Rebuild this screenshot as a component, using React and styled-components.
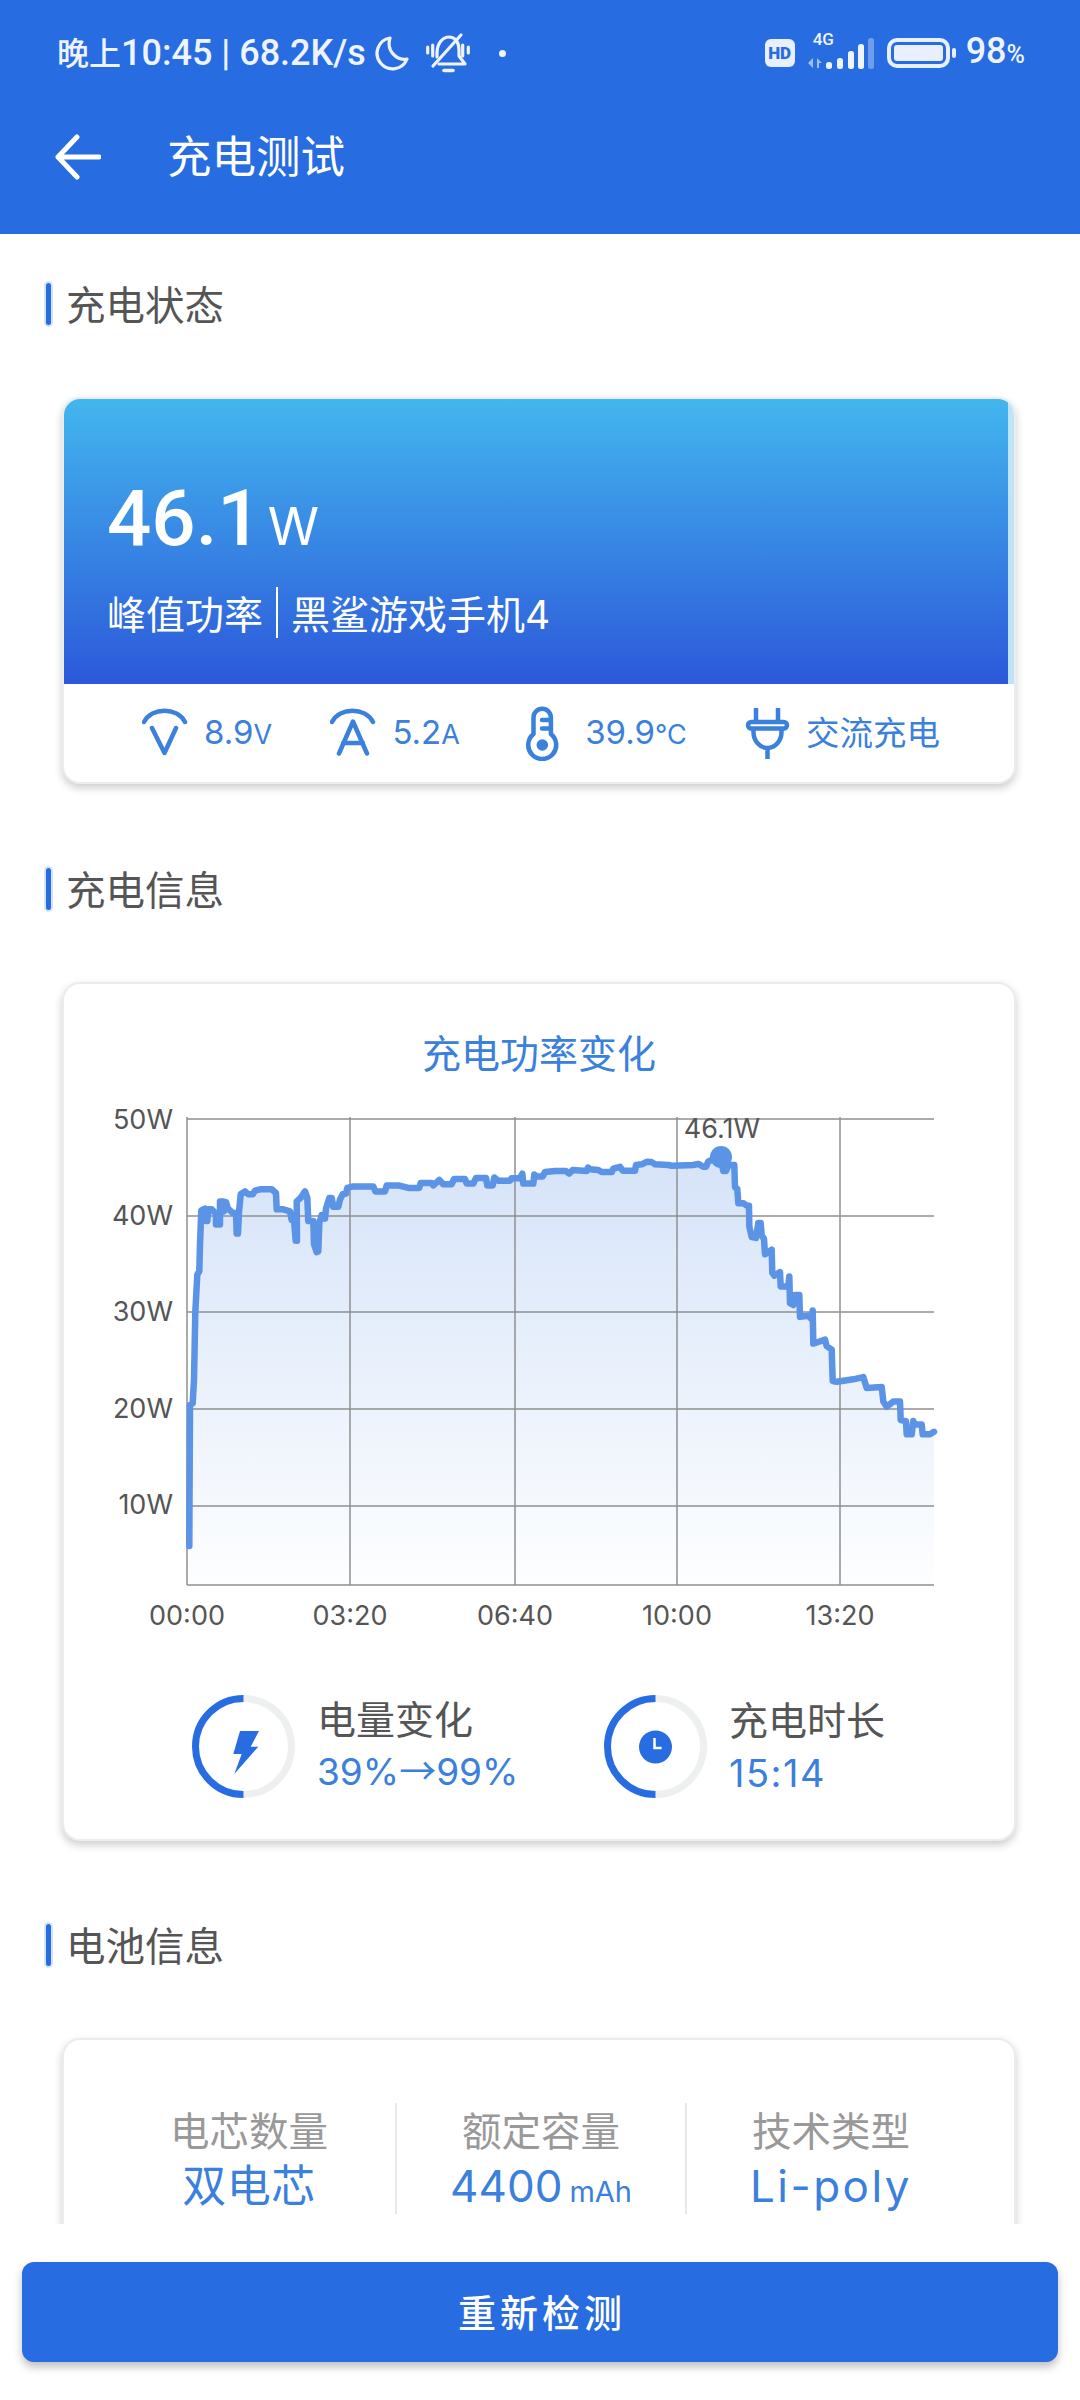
import styled, { createGlobalStyle } from "styled-components";

const BLUE = "#276ce0";
const TEXT_BLUE = "#3a80dc";

const GlobalStyle = createGlobalStyle`
  html, body {
    margin: 0;
    padding: 0;
    background: #fff;
  }
  body {
    font-family: Inter, "Noto Sans CJK SC", sans-serif;
  }
`;

const Page = styled.div`
  width: 1080px;
  height: 2400px;
  display: flex;
  flex-direction: column;
  overflow: hidden;
  background: #fff;
`;

const Header = styled.header`
  height: 234px;
  flex: none;
  background: ${BLUE};
  color: #fff;
`;

const StatusBar = styled.div`
  padding: 18px 55px 0 57px;
  box-sizing: border-box;
  height: 88px;
  display: flex;
  align-items: center;
  justify-content: space-between;
  color: #eef3fd;
  font-family: Roboto, "Noto Sans CJK SC", sans-serif;
  font-weight: 500;
`;

const StatusGroup = styled.div`
  display: flex;
  align-items: center;
`;

const StatusText = styled.span`
  font-size: 36px;
  line-height: 44px;
  white-space: nowrap;
`;

const StatusCjk = styled.span`
  font-size: 32px;
`;

const MoonIcon = styled.svg`
  width: 36px;
  height: 36px;
  margin-left: 8px;
`;

const BellIcon = styled.svg`
  width: 48px;
  height: 42px;
  margin-left: 14px;
`;

const StatusDot = styled.i`
  width: 7px;
  height: 7px;
  margin-left: 27px;
  border-radius: 50%;
  background: #eef3fd;
`;

const HdBadge = styled.span`
  width: 30px;
  height: 28px;
  border-radius: 6px;
  background: #e9f0fd;
  color: ${BLUE};
  font-size: 17px;
  font-weight: 900;
  line-height: 28px;
  text-align: center;
`;

const Signal = styled.div`
  position: relative;
  width: 74px;
  height: 32px;
  margin-left: 11px;
`;

const SignalLabel = styled.span`
  position: absolute;
  left: 7px;
  top: -5px;
  font-size: 17px;
  line-height: 15px;
  font-weight: 500;
`;

const SignalIcon = styled.svg`
  width: 74px;
  height: 32px;
  display: block;
`;

const Battery = styled.div`
  width: 63px;
  height: 30px;
  box-sizing: border-box;
  margin-left: 7px;
  padding: 3px;
  border: 4px solid #e9f0fd;
  border-radius: 10px;
`;

const BatteryLevel = styled.div`
  height: 100%;
  border-radius: 3px;
  background: #e9f0fd;
`;

const BatteryCap = styled.i`
  width: 4px;
  height: 10px;
  margin-left: 2px;
  border-radius: 2px;
  background: #e9f0fd;
`;

const BatteryText = styled.span`
  margin-left: 10px;
  font-size: 36px;
  line-height: 44px;
  small {
    font-size: 25px;
  }
`;

const NavBar = styled.div`
  height: 146px;
  box-sizing: border-box;
  padding: 0 0 54px 55px;
  display: flex;
  align-items: flex-end;
`;

const BackIcon = styled.svg`
  width: 46px;
  height: 46px;
  flex: none;
`;

const NavTitle = styled.h1`
  margin: 0 0 0 66px;
  font-size: 44.5px;
  font-weight: 400;
  line-height: 46px;
`;

const Content = styled.main`
  flex: 1;
  min-height: 0;
  overflow: hidden;
  padding-top: 47px;
`;

const SectionTitle = styled.h2`
  margin: 0 0 70px 46px;
  height: 46px;
  padding-left: 20px;
  position: relative;
  color: #555;
  font-size: 39.5px;
  font-weight: 400;
  line-height: 50px;

  &::before {
    content: "";
    position: absolute;
    left: 0;
    top: 2px;
    width: 5px;
    height: 42px;
    border-radius: 3px;
    background: ${BLUE};
    box-shadow: 0 0 0 2px #d6e4fa;
  }
`;

const Card = styled.section`
  margin: 0 64px 82px 62px;
  border: 2px solid #ececec;
  border-radius: 18px;
  background: #fff;
  box-shadow: 0 4px 9px rgba(0, 0, 0, 0.2);
  overflow: hidden;
`;

const ChartCard = styled(Card)`
  margin-bottom: 81px;
`;

const Hero = styled.div`
  height: 285px;
  box-sizing: border-box;
  border-right: 6px solid #bfe3f9;
  padding: 75px 0 0 43px;
  color: #fff;
  background: linear-gradient(#43b6ee, #2c58da) padding-box;
`;

const PowerValue = styled.div`
  display: flex;
  align-items: baseline;
  gap: 6px;
  height: 90px;
  font-family: Roboto, sans-serif;
  font-size: 78px;
  font-weight: 500;
  line-height: 90px;
`;

const PowerUnit = styled.span`
  font-family: Inter, sans-serif;
  font-size: 52px;
  font-weight: 400;
`;

const HeroLine = styled.div`
  display: flex;
  align-items: center;
  margin-top: 22px;
  height: 52px;
  font-size: 39px;
`;

const HeroDivider = styled.i`
  width: 2px;
  height: 51px;
  margin: 0 13px;
  background: #fff;
`;

const MetricRow = styled.div`
  height: 98px;
  padding: 0 74px 0 78px;
  display: flex;
  align-items: center;
  justify-content: space-between;
  color: ${TEXT_BLUE};
`;

const Metric = styled.div`
  display: flex;
  align-items: center;
  gap: ${(p) => p.$gap || "16px"};
  margin-left: ${(p) => p.$offset || "0"};
`;

const MetricIcon = styled.svg`
  display: block;
  flex: none;
  fill: none;
  stroke: ${TEXT_BLUE};
  stroke-width: 4.5;
  stroke-linecap: round;
  stroke-linejoin: round;
`;

const MetricText = styled.span`
  font-size: 33px;
  line-height: 40px;
  white-space: nowrap;
  small {
    font-size: 27px;
  }
`;

const MetricCjk = styled(MetricText)`
  font-size: 33.5px;
`;

const ChartTitle = styled.h3`
  margin: 0;
  padding-top: 45px;
  color: ${TEXT_BLUE};
  font-size: 39px;
  font-weight: 400;
  line-height: 50px;
  text-align: center;
`;

const ChartBox = styled.svg`
  display: block;
  width: 860px;
  height: 540px;
  margin: 16px 0 0 36px;
`;

const AxisLabel = styled.text`
  fill: #555;
  font-family: Inter, sans-serif;
  font-size: 27px;
  dominant-baseline: central;
`;

const StatRow = styled.div`
  margin-top: 58px;
  padding: 0 0 39px 128px;
  display: grid;
  grid-template-columns: 412px 1fr;
`;

const Stat = styled.div`
  display: flex;
  align-items: center;
  gap: 22px;
`;

const RingBox = styled.svg`
  width: 103px;
  height: 103px;
  display: block;
  flex: none;
`;

const StatText = styled.div`
  padding-top: 2px;
`;

const StatLabel = styled.div`
  color: #555;
  font-size: 39px;
  line-height: 50px;
`;

const StatValue = styled.div`
  color: ${TEXT_BLUE};
  font-size: ${(p) => (p.$wide ? "38px" : "37px")};
  letter-spacing: ${(p) => (p.$wide ? "1.5px" : "0")};
  line-height: 54px;
  white-space: nowrap;
`;

const ValueArrow = styled.span`
  font-family: Roboto, "Noto Sans CJK SC", sans-serif;
`;

const SpecCard = styled(Card)`
  margin-bottom: 0;
  padding: 63px 0 0 39px;
  display: grid;
  grid-template-columns: 292px 290px 290px;
`;

const SpecCell = styled.div`
  height: 111px;
  margin-bottom: 40px;
  text-align: center;
  border-left: ${(p) => (p.$first ? "none" : "2px solid #e8e8e8")};
`;

const SpecLabel = styled.div`
  color: #999;
  font-size: 39.5px;
  line-height: 50px;
  margin-top: 4px;
`;

const SpecValue = styled.div`
  color: ${TEXT_BLUE};
  font-size: 44px;
  line-height: 58px;
  letter-spacing: ${(p) => p.$spacing || "0"};
  small {
    font-size: 29px;
    margin-left: 7px;
  }
`;

const Footer = styled.footer`
  height: 176px;
  flex: none;
  box-sizing: border-box;
  padding: 38px 22px 0;
  background: #fff;
`;

const RetestButton = styled.button`
  width: 100%;
  height: 100px;
  padding: 0 0 4px 4px;
  border: none;
  border-radius: 12px;
  background: ${BLUE};
  color: #fff;
  font-family: inherit;
  font-size: 38px;
  font-weight: 500;
  letter-spacing: 4px;
  box-shadow: 0 5px 8px rgba(0, 0, 0, 0.25);
`;

// power samples, [x, y] in plot pixels before scaling down to the chart box
const riseSamples = [
  [298,1305],[300,910],[308,905],[312,840],[316,650],[322,545],[328,535],[330,460],[334,365],[345,360],
  [347,395],[352,395],[355,362],[365,362],[378,375],[378,405],[390,405],[390,340],[400,340],[402,368],
  [408,342],[414,360],[428,372],[438,372],[440,430],[444,430],[447,370],[452,320],[465,312],[475,320],
  [488,320],[495,310],[510,306],[545,306],[558,316],[560,362],[580,362],[600,368],[605,392],[612,392],
  [617,450],[621,450],[620,340],[632,330],[645,312],[652,330],[655,395],[670,395],[672,460],[680,482],
  [685,480],[688,400],[695,378],[705,388],[708,360],[718,330],[725,330],[730,355],[745,355],[750,335],
  [758,320],[768,318],[772,302],[790,298],[850,298],[856,312],[885,312],[890,295],[925,295],[955,302],
  [988,302],[992,288],[1025,288],[1030,295],[1048,280],[1060,292],[1085,292],[1092,277],[1125,277],[1130,290],
  [1150,290],[1158,274],[1188,274],[1192,295],[1208,295],[1213,273],[1225,282],[1260,282],[1265,275],[1290,275],
  [1297,262],[1300,290],[1330,290],[1333,265],[1340,270],[1358,270],[1365,258],[1395,255],[1428,255],[1438,262],
  [1448,252],[1490,255],[1494,245],
];

const fallSamples = [
  [150,250],[175,252],[185,258],[215,258],[220,248],[240,243],[248,254],[285,254],[288,238],[305,236],
  [320,229],[335,230],[345,236],[385,238],[395,240],[460,238],[475,235],[490,243],[498,243],[505,228],
  [520,222],[545,232],[550,255],[558,255],[565,238],[583,238],[585,300],[592,305],[595,345],[610,345],
  [620,352],[627,352],[628,410],[635,440],[648,442],[655,400],[662,400],[665,435],[672,445],[675,488],
  [695,475],[697,540],[703,548],[720,538],[722,578],[745,578],[748,550],[750,625],[760,630],[765,602],
  [778,602],[780,663],[805,660],[815,670],[818,645],[820,738],[830,735],[855,727],[860,745],[875,755],
  [878,843],[890,845],[940,838],[970,832],[980,862],[1025,860],[1030,900],[1040,915],[1060,900],[1080,900],
  [1082,952],[1098,955],[1100,992],[1115,992],[1120,955],[1125,965],[1145,965],[1148,992],[1170,992],[1182,985],
];

const plotY = (y) => y / 2.8 - 15;

const linePoints = [
  ...riseSamples.map(([x, y]) => [x / 3 - 10, plotY(y)]),
  ...fallSamples.map(([x, y]) => [x / 3 + 440, plotY(y)]),
];
const lineString = linePoints.map(([x, y]) => `${x.toFixed(1)},${y.toFixed(1)}`).join(" ");
const areaString = `${linePoints[0][0]},490 ${lineString} 834,490`;

const gridY = [24, 121, 217, 314, 411, 490];
const gridX = [87, 250, 415, 577, 740];
const yLabels = [
  ["50W", 24],
  ["40W", 120],
  ["30W", 216],
  ["20W", 313],
  ["10W", 409],
];
const xLabels = ["00:00", "03:20", "06:40", "10:00", "13:20"];

const PowerChart = () => (
  <ChartBox viewBox="0 0 860 540">
    <defs>
      <linearGradient id="powerFill" gradientUnits="userSpaceOnUse" x1="0" y1="45" x2="0" y2="490">
        <stop offset="0" stopColor="#d4e2f8" />
        <stop offset="1" stopColor="#fdfeff" />
      </linearGradient>
    </defs>
    <polygon points={areaString} fill="url(#powerFill)" />
    {gridY.map((y) => (
      <line key={y} x1="87" x2="834" y1={y} y2={y} stroke="#8f8f8f" strokeWidth="1.5" />
    ))}
    {gridX.map((x) => (
      <line key={x} x1={x} x2={x} y1="22" y2="490" stroke="#8f8f8f" strokeWidth="1.5" />
    ))}
    <polyline
      points={lineString}
      fill="none"
      stroke="#5b93e6"
      strokeWidth="6.5"
      strokeLinejoin="round"
      strokeLinecap="round"
    />
    <circle cx="621" cy="62" r="11" fill="#5b93e6" />
    <AxisLabel x="622" y="33" textAnchor="middle">46.1W</AxisLabel>
    {yLabels.map(([label, y]) => (
      <AxisLabel key={label} x="73" y={y} textAnchor="end">{label}</AxisLabel>
    ))}
    {xLabels.map((label, i) => (
      <AxisLabel key={label} x={gridX[i]} y="520" textAnchor="middle">{label}</AxisLabel>
    ))}
  </ChartBox>
);

const Ring = ({ children }) => (
  <RingBox viewBox="0 0 103 103">
    <path d="M51.5 3.5a48 48 0 0 1 0 96" fill="none" stroke="#eef0f0" strokeWidth="7" />
    <path d="M51.5 3.5a48 48 0 0 0 0 96" fill="none" stroke={BLUE} strokeWidth="7" />
    {children}
  </RingBox>
);

const App = () => (
  <Page>
    <GlobalStyle />
    <Header>
      <StatusBar>
        <StatusGroup>
          <StatusText>
            <StatusCjk>晚上</StatusCjk>10:45 | 68.2K/s
          </StatusText>
          <MoonIcon viewBox="0 0 36 36">
            <path
              d="M16 3a15.5 15.5 0 1 0 17 21C23 26 12 16 16 3Z"
              fill="none"
              stroke="#eef3fd"
              strokeWidth="3.2"
              strokeLinejoin="round"
            />
          </MoonIcon>
          <BellIcon viewBox="0 0 48 42" fill="none" stroke="#eef3fd" strokeWidth="3.2" strokeLinecap="round">
            <path d="M3.7 15v6M8.7 13v11M38.7 13v11M44.3 15v6" />
            <path d="M13 25v-4C13 11 19 5 25 5c6 0 10 5 10 13v6l6 8H15" strokeLinejoin="round" />
            <path d="M9 34 37 3" />
            <path d="M20 38.5h9" strokeWidth="3.6" />
          </BellIcon>
          <StatusDot />
        </StatusGroup>
        <StatusGroup>
          <HdBadge>HD</HdBadge>
          <Signal>
            <SignalLabel>4G</SignalLabel>
            <SignalIcon viewBox="0 0 74 32">
              <path d="M2 26l5-5v10zM11 21l5 5h-3v5h-2z" fill="#9fbff2" />
              <rect x="20" y="25" width="6" height="7" rx="2.5" fill="#eef3fd" />
              <rect x="31" y="21" width="6" height="11" rx="2.5" fill="#eef3fd" />
              <rect x="42" y="14" width="6" height="18" rx="2.5" fill="#eef3fd" />
              <rect x="52" y="7" width="6" height="25" rx="2.5" fill="#eef3fd" />
              <rect x="62" y="1" width="6" height="31" rx="2.5" fill="#6f9ceb" />
            </SignalIcon>
          </Signal>
          <Battery>
            <BatteryLevel />
          </Battery>
          <BatteryCap />
          <BatteryText>
            98<small>%</small>
          </BatteryText>
        </StatusGroup>
      </StatusBar>
      <NavBar>
        <BackIcon viewBox="0 0 46 46" fill="none" stroke="#fff" strokeWidth="5" strokeLinecap="round" strokeLinejoin="round">
          <path d="M44 23H3M22 3 3 23l19 20" />
        </BackIcon>
        <NavTitle>充电测试</NavTitle>
      </NavBar>
    </Header>

    <Content>
      <SectionTitle>充电状态</SectionTitle>
      <Card>
        <Hero>
          <PowerValue>
            46.1
            <PowerUnit>W</PowerUnit>
          </PowerValue>
          <HeroLine>
            峰值功率
            <HeroDivider />
            黑鲨游戏手机4
          </HeroLine>
        </Hero>
        <MetricRow>
          <Metric>
            <MetricIcon width="46" height="50" viewBox="0 0 46 50">
              <path d="M2 14C10-1 35-1 43 14M10 20l12.5 25L34 20" />
            </MetricIcon>
            <MetricText>
              8.9<small>V</small>
            </MetricText>
          </Metric>
          <Metric>
            <MetricIcon width="46" height="50" viewBox="0 0 46 50">
              <path d="M2 14C10-1 35-1 43 14M9 45.5 23 13.5l14 32M13 35h20" />
            </MetricIcon>
            <MetricText>
              5.2<small>A</small>
            </MetricText>
          </Metric>
          <Metric $gap="24px" $offset="6px">
            <MetricIcon width="37" height="56" viewBox="0 0 37 56">
              <path d="M9.5 29V12.5a8.7 8.7 0 0 1 17.4 0V29A14 14 0 1 1 9.5 29ZM18 15h8.5M18 23.5h8.5" />
              <circle cx="18.3" cy="40" r="3.5" fill={TEXT_BLUE} />
            </MetricIcon>
            <MetricText>
              39.9<small>℃</small>
            </MetricText>
          </Metric>
          <Metric>
            <MetricIcon width="45" height="56" viewBox="0 0 45 56">
              <path d="M11 3v13M33 3v13M8.5 24v3a14 16 0 0 0 28 0v-3M22.5 43v11" strokeLinecap="butt" />
              <rect x="3" y="17" width="39" height="6.5" rx="3.25" />
            </MetricIcon>
            <MetricCjk>交流充电</MetricCjk>
          </Metric>
        </MetricRow>
      </Card>

      <SectionTitle>充电信息</SectionTitle>
      <ChartCard>
        <ChartTitle>充电功率变化</ChartTitle>
        <PowerChart />
        <StatRow>
          <Stat>
            <Ring>
              <path d="M48 36h19l-8.3 15.7h7.6L42.3 79l7.4-20h-8.4Z" fill={BLUE} />
            </Ring>
            <StatText>
              <StatLabel>电量变化</StatLabel>
              <StatValue>
                39%<ValueArrow>→</ValueArrow>99%
              </StatValue>
            </StatText>
          </Stat>
          <Stat>
            <Ring>
              <circle cx="51.5" cy="52" r="16.5" fill={BLUE} />
              <path d="M50.5 43v10h7" fill="none" stroke="#fff" strokeWidth="2.5" />
            </Ring>
            <StatText>
              <StatLabel>充电时长</StatLabel>
              <StatValue $wide>15:14</StatValue>
            </StatText>
          </Stat>
        </StatRow>
      </ChartCard>

      <SectionTitle>电池信息</SectionTitle>
      <SpecCard>
        <SpecCell $first>
          <SpecLabel>电芯数量</SpecLabel>
          <SpecValue $spacing="0.5px">双电芯</SpecValue>
        </SpecCell>
        <SpecCell>
          <SpecLabel>额定容量</SpecLabel>
          <SpecValue>
            4400<small>mAh</small>
          </SpecValue>
        </SpecCell>
        <SpecCell>
          <SpecLabel>技术类型</SpecLabel>
          <SpecValue $spacing="2.5px">Li-poly</SpecValue>
        </SpecCell>
      </SpecCard>
    </Content>

    <Footer>
      <RetestButton>重新检测</RetestButton>
    </Footer>
  </Page>
);

export default App;
